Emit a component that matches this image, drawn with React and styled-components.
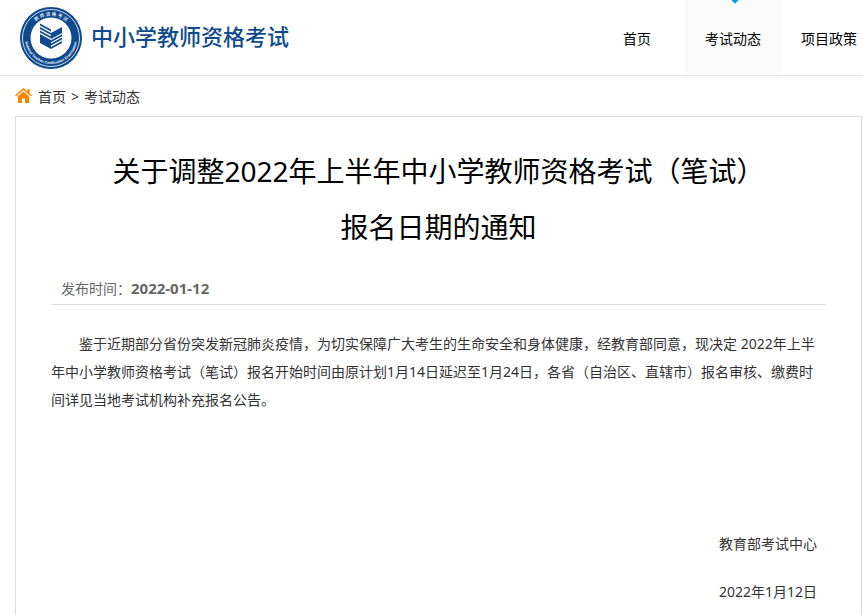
import styled, { createGlobalStyle, css } from "styled-components";

const brandColor = "#0f4a8f";
const accentColor = "#0a9de0";
const homeColor = "#ff8400";
const textColor = "#333";
const borderColor = "#ddd";

const GlobalStyle = createGlobalStyle`
  * {
    box-sizing: border-box;
  }
  body {
    margin: 0;
    background: #fff;
    color: ${textColor};
    font-family: "Noto Sans", "Noto Sans CJK SC", sans-serif;
    font-size: 14px;
    line-height: 28px;
  }
  a {
    color: inherit;
    text-decoration: none;
  }
`;

const Header = styled.header`
  display: flex;
  justify-content: space-between;
  height: 76px;
  padding-left: 20px;
  border-bottom: 1px solid #e2e2e2;
  overflow: hidden;
`;

const Brand = styled.a`
  display: flex;
  align-items: center;
  gap: 9px;
  color: ${brandColor};
  font-size: 22px;
  font-weight: 500;
  white-space: nowrap;

  svg {
    display: block;
    width: 62px;
    height: 62px;
  }
  span {
    padding-bottom: 4px;
  }
`;

const Nav = styled.nav`
  display: flex;
  flex-shrink: 0;
  height: 74px;
  margin-right: -14px;
`;

const NavLink = styled.a`
  position: relative;
  display: flex;
  align-items: center;
  justify-content: center;
  min-width: 96px;
  padding: 4px 20px 0;
  color: #000;

  ${(props) =>
    props.$active &&
    css`
      background: #fafafa;

      &::before {
        content: "";
        position: absolute;
        top: -6px;
        left: 50%;
        width: 8px;
        height: 8px;
        margin-left: -2px;
        background: ${accentColor};
        transform: rotate(45deg);
      }
    `}
`;

const Breadcrumb = styled.nav`
  display: flex;
  align-items: center;
  gap: 5px;
  height: 40px;
  padding: 2px 15px 0;

  svg {
    display: block;
    width: 18px;
    height: 18px;
  }
`;

const Article = styled.article`
  margin: 0 1px 0 15px;
  padding: 26px 35px 60px;
  border: 1px solid ${borderColor};
`;

const Title = styled.h1`
  margin: 0;
  color: #000;
  font-size: 28px;
  font-weight: 400;
  line-height: 56px;
  text-align: center;
`;

const Meta = styled.div`
  margin: 20px 0 25px;
  padding: 0 10px 1px;
  border-bottom: 1px solid ${borderColor};
  color: #666;

  strong {
    font-size: 15px;
    line-height: 20px;
  }
`;

const Paragraph = styled.p`
  margin: 0;
  text-indent: 2em;
`;

const Signature = styled.footer`
  display: flex;
  flex-direction: column;
  align-items: flex-end;
  gap: 20px;
  margin-top: 116px;
  padding-right: 9px;
`;

function Emblem() {
  return (
    <svg viewBox="0 0 62 62" aria-hidden="true">
      <defs>
        <path id="ringTop" d="M8.5 31a22.500 22.500 0 0 1 45 0" />
        <path id="ringBottom" d="M5 31a26 26 0 0 0 52 0" />
      </defs>
      <circle cx="31" cy="31" r="31" fill={brandColor} />
      <circle cx="31" cy="31" r="28.500" fill="none" stroke="#fff" strokeWidth="0.800" />
      <circle cx="31" cy="31" r="20.500" fill="#fff" />
      <g fill="#fff" fontFamily="Liberation Sans, Noto Sans CJK SC, sans-serif" textAnchor="middle">
        <text fontSize="4.500">
          <textPath href="#ringTop" startOffset="50%">
            教 师 资 格 考 试
          </textPath>
        </text>
        <text fontSize="3.600" fontWeight="700">
          <textPath href="#ringBottom" startOffset="50%">
            National Teacher Certification Examination
          </textPath>
        </text>
      </g>
      <g fill={brandColor}>
        <path d="M20 16.500 31 22.500v2l-11-6z" />
        <path d="M20 20 31 26v2l-11-6z" />
        <path d="M20 23.500 31 29.500v2l-11-6z" />
        <path d="M20 27 31 33v9l-11-6z" />
        <path d="M42 20 31 26v6l11-6z" />
        <path d="M42 27.200 31 33.200v2l11-6z" />
        <path d="M42 30.600 31 36.600v2l11-6z" />
        <path d="M42 34 31 40v2l11-6z" />
      </g>
    </svg>
  );
}

function HomeIcon() {
  return (
    <svg viewBox="0 0 18 18" fill={homeColor} aria-hidden="true">
      <path d="M8.500 0 0 7.500l1 1L8.500 2 16 8.500l1-1-2.500-2.300V1h-2v2.500z" />
      <path d="M8.500 3.500 3 8.300V15h4v-4.500h3V15h4V8.300z" />
    </svg>
  );
}

function App() {
  return (
    <>
      <GlobalStyle />
      <Header>
        <Brand href="#">
          <Emblem />
          <span>中小学教师资格考试</span>
        </Brand>
        <Nav>
          <NavLink href="#">首页</NavLink>
          <NavLink href="#" $active>
            考试动态
          </NavLink>
          <NavLink href="#">项目政策</NavLink>
        </Nav>
      </Header>
      <Breadcrumb>
        <HomeIcon />
        <a href="#">首页</a>
        <span>&gt;</span>
        <a href="#">考试动态</a>
      </Breadcrumb>
      <Article lang="zh-CN">
        <Title>
          关于调整2022年上半年中小学教师资格考试（笔试）
          <br />
          报名日期的通知
        </Title>
        <Meta>
          发布时间：<strong>2022-01-12</strong>
        </Meta>
        <Paragraph>
          鉴于近期部分省份突发新冠肺炎疫情，为切实保障广大考生的生命安全和身体健康，经教育部同意，现决定
          2022年上半年中小学教师资格考试（笔试）报名开始时间由原计划1月14日延迟至1月24日，各省（自治区、直辖市）报名审核、缴费时间详见当地考试机构补充报名公告。
        </Paragraph>
        <Signature>
          <span>教育部考试中心</span>
          <span>2022年1月12日</span>
        </Signature>
      </Article>
    </>
  );
}

export default App;
